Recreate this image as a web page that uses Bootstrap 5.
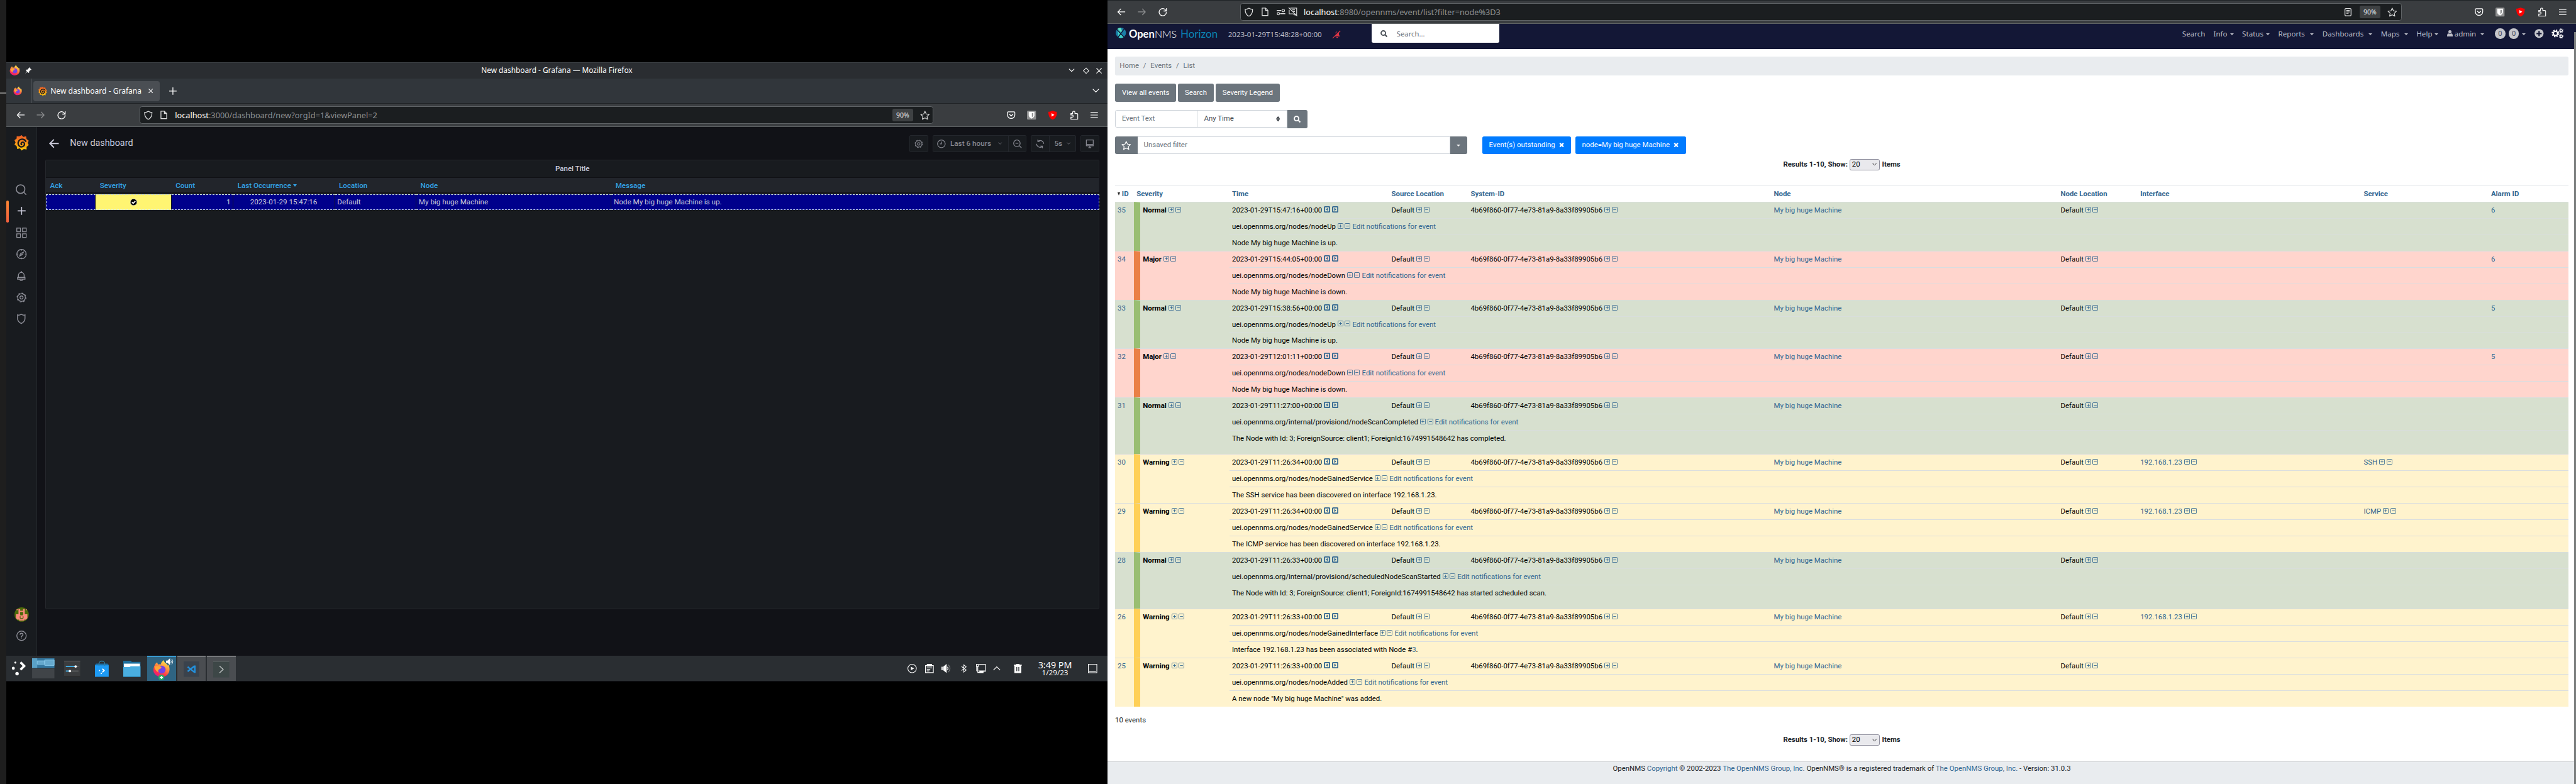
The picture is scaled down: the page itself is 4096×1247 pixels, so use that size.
<!DOCTYPE html>
<html lang="en">
<head>
<meta charset="utf-8">
<title>Grafana and OpenNMS Horizon</title>
<link href="https://cdn.jsdelivr.net/npm/bootstrap@5.3.0/dist/css/bootstrap.min.css" rel="stylesheet">
<style>
html,body{margin:0;background:#000;overflow:hidden}
.desk{zoom:.91204;width:4491px;height:1368px;position:relative;background:#000;overflow:hidden;line-height:1;white-space:nowrap}
.noto{font-family:"Noto Sans",sans-serif}
.robo{font-family:Roboto,sans-serif}
svg{display:block;fill:none;stroke:currentColor;overflow:visible}
.edge{position:absolute;left:0;top:0;width:11px;height:1368px;background:#1e1e1e}
.edge i{display:block;margin-top:161px;height:2px;background:#7d7d7d}
.win-l{position:absolute;left:11px;top:108px;width:1920px;height:1080px;background:#111217}
.win-r{position:absolute;left:1931px;top:0;width:2560px;height:1368px;background:#fff}

/* browser chrome */
.titlebar{height:29px;background:#2a2d31;border-top:1px solid #3c4044;color:#fcfcfc;font-size:13px;display:grid;grid-template-columns:5px 28px 11px 24px 1fr 264px 1fr 11px 13.500px 10.500px 13.500px 10px 9.500px;align-items:center}
.titlebar>*{justify-self:start}
.tabstrip{height:44px;background:#31363b;border-bottom:1px solid #202326;color:#fcfcfc;font-size:13.23px;display:grid;grid-template-columns:12px 17px 14px 4px 221px 16px 13px 1fr 12px 14.500px;align-items:center}
.tabstrip .vline{background:#5b5f63;width:1px;height:43px}
.ftab{height:36px;border-radius:4px;background:#4a4e53;display:grid;grid-template-columns:9px 16px 5px 159px 12px 9px;align-items:center;margin-top:1px}
.navbar-ff{height:41px;background:#3a3d40;border-bottom:1px solid #5e6264;color:#fcfcfc;display:grid;align-items:center;font-size:13.96px}
.nl{grid-template-columns:17px 36px 36px 143px 1384.400px 128.200px 35.400px 36.500px 37.300px 36px 1fr}
.nr{grid-template-columns:16px 37px 36px 142px 2025px 128px 36px 36px 37px 37px 1fr}
.urlbar{height:31px;background:#1b1e20;border:1px solid #5f6366;border-radius:4px;display:grid;align-items:center;color:#8f9193}
.urlbar b{font-weight:400;color:#fcfcfc}
.urlbar svg{color:#dfe0e0}
.ul-l{grid-template-columns:7px 29px 25px 1fr 36px 12px 22.400px}
.ul-r{grid-template-columns:7px 29px 27px 21px 26px 1fr 26px 36px 12px 24px}
.zoompill{height:22px;border-radius:3px;background:#3e4143;color:#e8e8e8;font-size:11.5px;line-height:22px;text-align:center}

/* grafana */
.gwrap{height:922px}
.side{width:54px;background:#181b1f;border-right:1px solid #25282d;color:#8e8f98}
.side>div{display:flex;align-items:center;justify-content:center;height:37.7px}
.side .glogo{height:54px;margin-bottom:35.5px}
.side .gava{margin-top:477px}
.side .act{position:relative;color:#ccccdc}
.side .act::before{content:"";position:absolute;left:0;top:1px;width:4px;height:38px;border-radius:2px;background:linear-gradient(#ff8833,#f55f3e)}
.ghead{width:1852px;height:57px;padding:0 0 0 21px;color:#ccccdc;font-size:15.74px}
.ghead .ttl{margin-left:19px}
.gbtn{height:30px;border:1px solid #24272d;background:#181b1f;border-radius:2px;display:flex;align-items:center;color:#85868f;font-size:12.9px;font-weight:500}
.gbtn>*{height:28px;display:flex;align-items:center;justify-content:center}
.gbtn .sep{border-left:1px solid #24272d}
.gb1{width:33px}.gb2{width:164px;margin-left:7.500px}.gb3{width:79px;margin-left:8px}.gb4{width:33px;margin-left:7.500px}
.w30{width:30px}
.gpanel{margin-left:14px;width:1838px;height:784px;border:1px solid #25282d;border-radius:2px;background:#181b1f;color:#ccccdc}
.gpanel .ptitle{height:30px;font-size:12.62px;font-weight:500;border-bottom:1px solid #101115;display:flex;align-items:center;justify-content:center}
.gtab{table-layout:fixed;width:1836px;border-collapse:separate;border-spacing:0;font-size:12.8px}
.gtab th{height:27px;padding:2px 7px 0;font-weight:500;color:#33a2e5;background:#22252b;border-bottom:1px solid #131418}
.gtab td{height:27px;padding:0 4px;background:#00008b;border-top:1px dashed #cfe0e6;border-bottom:1px dashed #cfe0e6;border-right:1px solid #14161f}
.gtab td:first-child{border-left:1px dashed #cfe0e6}
.gtab td:last-child{border-right:1px dashed #cfe0e6}
.gtab .gapr td{height:2px;padding:0;border:0;background:#181b1f}
.gtab td.sev{background:#fff572}
.gtab td.dt{padding-left:29px}
.gtab .crt{border-width:5px 4px 0;margin:0;vertical-align:2px}

/* taskbar */
.tbar{position:absolute;left:0;top:1036px;width:1920px;height:44px;background:#2a2e32;color:#fcfcfc;display:grid;align-items:center;grid-template-columns:9px 36px 56px 54px 49px 42px 52px 52px 51px 1169.700px 31px 29px 34px 26.300px 29.700px 36.300px 42px 59px 28px 1fr}
.task{height:44px;width:50px;display:flex;align-items:center;justify-content:center;background:#4a4d51;border-top:3px solid #77797c}
.task.on{background:#2f6482;border-color:#3a9cd2}
.tplus{left:19px;top:30px}.tvol{left:33px;top:2px}
.clock{text-align:center;font-size:15.71px;line-height:15px}
.clock small{display:block;font-size:12.76px;line-height:13px}

/* opennms */
.onms{font-size:12.52px;color:#212529}
.onav{height:43px;background:#131736;color:#bdbec8;font-size:12.7px;display:grid;align-items:start;grid-template-columns:14px 23px 90px 83px 181px 15px 54px 223px 1190.5px 54.5px 36px 14px 48px 15px 62px 15px 87px 15px 47px 15px 38px 15px 65px 19px 54px 15px 29px 1fr}
.onav>*{grid-row:1}
.brand{font:18.25px/20px Lato,sans-serif;color:#fff;margin-top:7px}
.brand b{font-weight:700}.brand .nms{font-size:17.6px;font-weight:300}.brand.hz{font-size:18.64px;color:#0b85b5}
.mt6{margin-top:6px}.mt12{margin-top:12px}
.osearch{height:33px;background:#fff;border-radius:0 0 3px 3px;color:#6c757d;font-size:12.4px;display:grid;grid-template-columns:16px 28px 1fr;align-items:center}
.mi{display:flex;justify-content:space-between;align-items:center;height:33px}
.crt{display:inline-block;border:3.4px solid transparent;border-top-color:currentColor;border-bottom:0;margin-top:3px}
.cnt{width:18px;height:18px;border-radius:50%;background:#c6c7cc;color:#42465c;font-size:12px;line-height:18px;text-align:center}
.obody{padding:0 0 0 13px;width:2547px}
.crumbs{height:33px;margin-top:14px;background:#e9ecef;border-radius:3px;padding:0 8px 1px;display:flex;align-items:center;color:#6c757d;gap:7.5px}
.lk,.crumbs a{color:#336791;text-decoration:none}
.obtn{height:32px;background:#6c757d;color:#fff;border:0;border-radius:3px;font-size:12.52px;padding:0 12px 1px;display:flex;align-items:center;justify-content:center;line-height:1}
.bar1{margin-top:14px;gap:3px}
.bar2{margin-top:14px;height:32px}
.bar3{margin-top:14px;height:31px}
.fld{height:31px;border:1px solid #ced4da;background:#fff;color:#6c757d;display:flex;align-items:center;padding:0 11px}
.f-text{width:144px;border-radius:3px 0 0 3px}
.f-time{width:157px;margin-left:-1px;color:#495057;justify-content:space-between}
.f-go{width:35px;border-radius:0 3px 3px 0;padding:0}
.f-star{width:39px;height:31px;border-radius:3px 0 0 3px;padding:0}
.f-name{width:545px;border-left:0}
.f-drop{width:30px;height:31px;border-radius:0 3px 3px 0;padding:0}
.chip{height:31px;background:#007bff;color:#fff;border-radius:3px;display:flex;align-items:center;padding:0 12px;margin-left:7px}
.chip.first{margin-left:26px}
.chip svg{margin-left:7px}
.pager{height:20px;width:2534px;display:flex;align-items:center;justify-content:center;font-weight:700;gap:3.5px;margin-top:8px}
.pager.low{margin-top:18px}
.psel{width:53px;height:20px;border:1px solid #8f8f9d;border-radius:3px;background:#e9e9ed;color:#000;font-weight:400;display:flex;align-items:center;justify-content:space-between;padding:0 4px 0 3px}
.total{margin-top:18px}
.table.evt{table-layout:fixed;width:2534px;margin:26px 0 0;border-collapse:separate;border-spacing:0;font-size:12.52px;line-height:14px}
.table.evt th{height:29.4px;padding:0 4.5px;border:0;border-top:1px solid #dee2e6;color:#336791;font-weight:700;vertical-align:middle}
.table.evt th .crt{color:#222;border-width:6px 3px 0;margin:0 3px 1px 0}
.table.evt td{height:28.4px;padding:6.6px 4.5px 0;border:0;border-top:1px solid #d9dde0;vertical-align:top;color:#000}
.table.evt .tall td.msg{height:42.4px}
.table.evt .n td{background:#d7e0cf;border-top-color:#d8dedb}.table.evt .m td{background:#ffd5cd}.table.evt .w td{background:#fff3cd}
.table.evt .n td.sv{border-left:12px solid #99be72}.table.evt .m td.sv{border-left:12px solid #ea8046}.table.evt .w td.sv{border-left:12px solid #ffd057}
.table.evt td.sv{font-weight:700}
.table.evt td svg{display:inline-block;vertical-align:-1.2px;color:#336791}
.pm{margin-left:3.5px;display:inline-flex;gap:2.4px;margin-right:3.2px}
.table.evt td a{color:#336791;text-decoration:none}
.ofoot{border-top:1px solid #cfd2d5;background:#e9ecef;height:41px;text-align:center;padding-top:6px;margin-top:27px}
.sbar{position:absolute;right:0;top:56px;width:3.4px;height:1312px;background:#7c7f7f}
</style>
</head>
<body>
<svg width="0" height="0" class="position-absolute">
<defs>
<linearGradient id="gf" x1="0" y1="0" x2="0" y2="1"><stop offset="0" stop-color="#f05a28"/><stop offset="1" stop-color="#fbca0a"/></linearGradient>
<linearGradient id="ffx" x1=".8" y1="0" x2=".3" y2="1"><stop offset="0" stop-color="#fff44f"/><stop offset=".4" stop-color="#ff9640"/><stop offset=".75" stop-color="#ff3647"/><stop offset="1" stop-color="#e31587"/></linearGradient>
<symbol id="firefox" viewBox="0 0 32 32"><path fill="url(#ffx)" stroke="none" d="M3 10C4 7 6 5 8 4c0 2 1 3 2 4 1-1 3-1 4 0 1-4 3-6 6-8 0 4 3 5 5 7 1 1 2 2 2 3l1-2c4 8 2 16-4 20-7 4-16 3-21-4C0 20 1 14 3 10z"/><circle cx="16" cy="17" r="7" fill="#7542e5" stroke="none"/><path fill="#ffa436" stroke="none" d="M3 11c4-1 8-1 12 1 1 1 0 3-3 4-2 1-3 3-2 6-4-2-7-6-7-11z"/></symbol>
<symbol id="grafana" viewBox="0 0 26 28"><path fill="url(#gf)" stroke="none" d="M13 0l3 3 5-1 1 5 4 3-2 4 2 4-4 3 0 5-5-1-4 3-3-4-5 1-1-5-4-3 2-4-2-4 4-3 0-4 5 0z"/><path stroke="#17191e" stroke-width="2.500" d="M21 12c-2-5-8-6-12-3-4 4-3 10 2 12 4 1 8-2 7-6-1-3-5-3-6 0 0 1 1 2 2 2"/></symbol>
<symbol id="back" viewBox="0 0 15 14"><path stroke-width="1.500" d="M15 7H1.500M7 1L1.200 7 7 13"/></symbol>
<symbol id="fwd" viewBox="0 0 15 14"><path stroke-width="1.300" d="M0 7h13.500M8 1l5.800 6L8 13"/></symbol>
<symbol id="reload" viewBox="0 0 15 15"><path stroke-width="1.500" d="M13 5A6.300 6.300 0 1 0 13.800 8M14 1v5H9"/></symbol>
<symbol id="shield" viewBox="0 0 15 16"><path stroke-width="1.400" d="M7.500 1C9 2 12 3 14 3.200 14 9 12 13 7.500 15.200 3 13 1 9 1 3.200 3 3 6 2 7.500 1z"/></symbol>
<symbol id="doc" viewBox="0 0 12 15"><path stroke-width="1.400" d="M1 1h6l4 4v9H1zM7 1v4h4"/></symbol>
<symbol id="star" viewBox="0 0 17 16"><path stroke-width="1.300" stroke-linejoin="round" d="M8.500 1l2.200 4.800 5.200.600-3.800 3.600 1 5.200-4.600-2.600-4.600 2.600 1-5.200L1.100 6.400l5.200-.600z"/></symbol>
<symbol id="pocket" viewBox="0 0 15 14"><path stroke-width="1.500" d="M2.500 1h10a1.500 1.500 0 0 1 1.500 1.500V6a6.500 6.500 0 0 1-13 0V2.500A1.500 1.500 0 0 1 2.500 1zM4.300 5l3.200 3.200L10.700 5"/></symbol>
<symbol id="bitw" viewBox="0 0 16 16"><rect width="16" height="16" rx="2" fill="#8f9091" stroke="none"/><path fill="#fff" stroke="none" d="M3 2h10v6c0 3-3 5-5 6-2-1-5-3-5-6z"/><path fill="#8f9091" stroke="none" d="M8.500 4H11v4c0 1.500-1.500 3-2.500 3.700z"/></symbol>
<symbol id="yt" viewBox="0 0 15 16"><path fill="#f00" stroke="none" d="M7.500 0C10 1 12.500 2 15 2c0 7-2 11.500-7.500 14C2 13.500 0 9 0 2c2.500 0 5-1 7.500-2z"/><path fill="#fff" stroke="none" d="M5.500 4.500l5 3-5 3z"/></symbol>
<symbol id="puzzle" viewBox="0 0 15 16"><path stroke-width="1.400" d="M5 5V3a2 2 0 0 1 4 0v2h3.500a1.500 1.500 0 0 1 1.500 1.500V15H2v-3.500h2a1.700 1.700 0 0 0 0-4H2V5z"/></symbol>
<symbol id="burger" viewBox="0 0 13 11"><path stroke-width="1.300" d="M0 1h13M0 5.500h13M0 10h13"/></symbol>
<symbol id="chev" viewBox="0 0 12 7"><path stroke-width="1.400" d="M.700.700L6 6l5.300-5.300"/></symbol>
<symbol id="mag" viewBox="0 0 12 12"><circle cx="5" cy="5" r="3.900" stroke-width="2"/><path stroke-width="2.200" d="M8 8l3.500 3.500"/></symbol>
<symbol id="gmag" viewBox="0 0 19 19"><circle cx="8.500" cy="8.500" r="7.500" stroke-width="1.700"/><path stroke-width="1.700" d="M14 14l4.300 4.300"/></symbol>
<symbol id="gear" viewBox="0 0 20 20"><circle cx="10" cy="10" r="7.500" stroke-width="1.500"/><circle cx="10" cy="10" r="8.700" stroke-width="1.500" stroke-dasharray="3.400 3.430"/><circle cx="10" cy="10" r="3" stroke-width="1.600"/></symbol>
<symbol id="plus" viewBox="0 0 10 10"><rect x=".5" y=".5" width="9" height="9" rx="1.500"/><path d="M2.500 5h5M5 2.500v5"/></symbol>
<symbol id="minus" viewBox="0 0 10 10"><rect x=".5" y=".5" width="9" height="9" rx="1.500"/><path d="M2.500 5h5"/></symbol>
<symbol id="cleft" viewBox="0 0 11 11"><rect x="1" y="1" width="9" height="9" rx="1" stroke-width="2"/><path fill="currentColor" stroke="none" d="M7 2.700v5.600L3.500 5.500z"/></symbol>
<symbol id="cright" viewBox="0 0 11 11"><rect x="1" y="1" width="9" height="9" rx="1" stroke-width="2"/><path fill="currentColor" stroke="none" d="M4 2.700v5.600l3.500-2.800z"/></symbol>
<symbol id="xx" viewBox="0 0 9 9"><path stroke-width="2.800" d="M1 1l7 7M8 1L1 8"/></symbol>
</defs></svg>

<main class="desk">
<div class="edge"><i></i></div>

<section class="win-l">
  <div class="titlebar noto">
    <span></span><svg width="19" height="20"><use href="#firefox"/></svg>
    <svg width="11" height="11" viewBox="0 0 11 11"><path fill="#fcfcfc" stroke="none" d="M7 0l4 4-1 1-1 0-2 2 0 2-1 1-2-2-4 3 3-4-2-2 1-1h2l2-2z"/></svg>
    <span></span><span></span><span>New dashboard - Grafana — Mozilla Firefox</span><span></span>
    <svg width="11" height="6"><use href="#chev"/></svg><span></span>
    <svg width="11" height="12" viewBox="0 0 12 12"><path stroke-width="1.200" d="M6 .8L11.200 6 6 11.200.8 6z"/></svg><span></span>
    <svg width="10" height="10" viewBox="0 0 10 10"><path stroke-width="1.300" d="M.5.5l9 9M9.500.5l-9 9"/></svg>
  </div>
  <div class="tabstrip noto">
    <span></span><svg width="16" height="17"><use href="#firefox"/></svg><span></span><i class="vline"></i>
    <div class="ftab"><span></span><svg width="15" height="16"><use href="#grafana"/></svg><span></span><span>New dashboard - Grafana</span><span></span>
      <svg width="8" height="8" viewBox="0 0 8 8"><path stroke-width="1.200" d="M.5.5l7 7M7.500.5l-7 7"/></svg></div>
    <span></span><svg width="13" height="13" viewBox="0 0 13 13"><path stroke-width="1.400" d="M6.500 0v13M0 6.500h13"/></svg><span></span>
    <svg width="12" height="7"><use href="#chev"/></svg>
  </div>
  <div class="navbar-ff nl noto">
    <span></span><svg width="15" height="13"><use href="#back"/></svg><svg width="15" height="13" opacity=".45"><use href="#fwd"/></svg><svg width="15" height="15"><use href="#reload"/></svg>
    <div class="urlbar ul-l"><span></span><svg width="15" height="16"><use href="#shield"/></svg><svg width="12" height="15"><use href="#doc"/></svg>
      <span><b>localhost</b>:3000/dashboard/new?orgId=1&amp;viewPanel=2</span><span class="zoompill">90%</span><span></span><svg width="17" height="16"><use href="#star"/></svg></div>
    <span></span><svg width="15" height="14"><use href="#pocket"/></svg><svg width="16" height="16"><use href="#bitw"/></svg><svg width="15" height="16"><use href="#yt"/></svg><svg width="15" height="16"><use href="#puzzle"/></svg><svg width="13" height="11"><use href="#burger"/></svg>
  </div>
  <div class="d-flex robo gwrap">
    <div class="side">
      <div class="glogo"><svg width="25" height="27"><use href="#grafana"/></svg></div>
      <div><svg width="19" height="19"><use href="#gmag"/></svg></div>
      <div class="act"><svg width="14" height="14" viewBox="0 0 14 14"><path stroke-width="1.700" d="M7 0v14M0 7h14"/></svg></div>
      <div><svg width="18" height="18" viewBox="0 0 18 18"><path stroke-width="1.500" d="M.8.8h6.400v6.400H.8zM10.800.8h6.400v6.400h-6.400zM.8 10.800h6.400v6.400H.8zM10.800 10.800h6.400v6.400h-6.400z"/></svg></div>
      <div><svg width="18" height="18" viewBox="0 0 18 18"><circle cx="9" cy="9" r="8.200" stroke-width="1.500"/><path stroke-width="1.300" d="M9 1v2M9 15v2M1 9h2M15 9h2M12.500 5.500l-2 4.500-5 2.500 2-4.500zM8 9.500l1.500-1"/></svg></div>
      <div><svg width="15" height="18" viewBox="0 0 15 18"><path stroke-width="1.500" d="M7.500 0v2.500M1 14.300v-3h1.500V7.500a5 5 0 0 1 10 0v3.800H14v3zM2.500 11.300h10M5 15a2.600 2.600 0 0 0 5 0"/></svg></div>
      <div><svg width="18" height="18"><use href="#gear"/></svg></div>
      <div><svg width="15" height="18" viewBox="0 0 15 18"><path stroke-width="1.600" d="M1 2c2 .8 4.500.2 6.500-1 2 1.200 4.500 1.800 6.500 1v6c0 4-2.500 7-6.500 9C3.500 15 1 12 1 8z"/></svg></div>
      <div class="gava"><svg width="25" height="25" viewBox="0 0 25 25"><circle cx="12.500" cy="12.500" r="12.500" fill="#4c6a0a" stroke="none"/><path fill="#fb8b7c" stroke="none" d="M7 3h3v3h5V3h3v9h4.500v7L20 21.500h-3v1.500h-9v-1.500H5L2.500 19v-7H7zM10 9v5h5V9zM9 16v2h2v-2zM14 16v2h2v-2zM4 3h1.500v2H3.500zM20 3h1l1 2h-2z"/><path fill="#4c6a0a" stroke="none" d="M10 8h5v4h-5zM9.500 19h6v1.500h-6z"/></svg></div>
      <div><svg width="18" height="18" viewBox="0 0 18 18"><circle cx="9" cy="9" r="8.200" stroke-width="1.500"/><path stroke-width="1.600" d="M6.500 7.200a2.500 2.500 0 1 1 2.500 2.500v1.300M9 12.200v1.600"/></svg></div>
    </div>
    <div>
      <div class="ghead d-flex align-items-center">
        <svg width="17" height="16" viewBox="0 0 17 16"><path stroke-width="2.200" d="M17 8H2M8.500 1L1.500 8l7 7"/></svg><span class="ttl me-auto">New dashboard</span>
        <div class="gbtn gb1"><span class="w-100"><svg width="15" height="15"><use href="#gear"/></svg></span></div>
        <div class="gbtn gb2"><span class="w30"><svg width="15" height="15" viewBox="0 0 15 15"><circle cx="7.500" cy="7.500" r="6.700" stroke-width="1.400"/><path stroke-width="1.400" d="M7.500 3.500v4h-2.500"/></svg></span><span>Last 6 hours</span><span class="w30"><svg width="7" height="4.500"><use href="#chev"/></svg></span><span class="sep flex-fill"><svg width="15" height="15" viewBox="0 0 15 15"><circle cx="6.500" cy="6.500" r="5.700" stroke-width="1.400"/><path stroke-width="1.400" d="M11 11l3.500 3.500M4 6.500h5"/></svg></span></div>
        <div class="gbtn gb3"><span class="w30"><svg width="15" height="15" viewBox="0 0 15 15"><path stroke-width="1.400" d="M3.500 3A6.300 6.300 0 0 1 13.800 7.500M3.500 0v3.500H7M11.500 12A6.300 6.300 0 0 1 1.200 7.500M11.500 15v-3.500H8"/></svg></span><span class="sep flex-fill">5s<svg class="ms-2" width="7" height="4.500"><use href="#chev"/></svg></span></div>
        <div class="gbtn gb4"><span class="w-100"><svg width="15" height="15" viewBox="0 0 15 15"><path stroke-width="1.400" d="M1.500.8h12v10h-12zM1.500 8.500h12M7.500 11v3M5 14.200h5"/></svg></span></div>
      </div>
      <div class="gpanel">
        <div class="ptitle">Panel Title</div>
        <table class="gtab">
          <colgroup><col style="width:87px"><col style="width:132px"><col style="width:108px"><col style="width:177px"><col style="width:142px"><col style="width:340px"><col></colgroup>
          <tr><th>Ack</th><th>Severity</th><th>Count</th><th>Last Occurrence <i class="crt"></i></th><th>Location</th><th>Node</th><th>Message</th></tr>
          <tr class="gapr"><td colspan="7"></td></tr>
          <tr><td></td><td class="sev"><svg class="mx-auto" width="12" height="12" viewBox="0 0 12 12"><circle cx="6" cy="6" r="5.800" fill="#000" stroke="#fff" stroke-width=".6"/><path stroke="#fff" stroke-width="1.900" d="M3 6l2.200 2.200L9 4.200"/></svg></td><td class="text-end">1</td><td class="dt">2023-01-29 15:47:16</td><td>Default</td><td>My big huge Machine</td><td>Node My big huge Machine is up.</td></tr>
        </table>
      </div>
    </div>
  </div>
  <div class="tbar noto">
    <span></span>
    <svg width="25" height="24" viewBox="0 0 25 24"><g fill="#fff" stroke="none"><circle cx="7" cy="2" r="1.800"/><circle cx="3.500" cy="12" r="2.600"/><circle cx="10" cy="21.500" r="3"/></g><path stroke="#fff" stroke-width="4" d="M16 1.500l6.500 6.500-6.500 6.500"/></svg>
    <svg width="39" height="35" viewBox="0 0 39 35"><g stroke="none"><path fill="#34779f" d="M0 0h39v17H0z"/><path fill="#5aa1c6" d="M0 0h9v17H0z"/><path fill="#66a9cd" stroke="#8accec" d="M9 4.500h13v6H9zM22 3h16.500v9.500H22z"/><path fill="#404448" d="M0 18h39v17H0z"/></g></svg>
    <svg width="28" height="28" viewBox="0 0 28 28"><path fill="#3a3c3e" stroke="none" d="M0 0h28v28H0z"/><path stroke="#66686a" d="M0 .5h28"/><path stroke="#222" d="M0 27.500h28"/><path stroke="#5d5f61" stroke-width="2" d="M3 10h22M3 18h22"/><path stroke="#3daee9" stroke-width="2" d="M3 10h17M3 18h7"/><circle cx="20" cy="10" r="2.100" fill="#fff" stroke="none"/><circle cx="10" cy="18" r="2.100" fill="#fff" stroke="none"/></svg>
    <svg width="24" height="28" viewBox="0 0 24 28"><path fill="#1e9bf5" stroke="none" d="M0 7h24v21H0z"/><path fill="#1d6fa6" stroke="none" d="M2 5h20l2 3H0z"/><path stroke="#2f7fa5" stroke-width="1.500" d="M7 9V5a5 4.500 0 0 1 10 0v4"/><path stroke="#fff" stroke-width="2" d="M13 14l3 3-3 3"/><circle cx="8" cy="17" r="1" fill="#fff" stroke="none"/><circle cx="11" cy="22" r="1.200" fill="#fff" stroke="none"/></svg>
    <svg width="30" height="28" viewBox="0 0 30 28"><path fill="#1f6f9c" stroke="none" d="M0 0h13l2 2h15v26H0z"/><path fill="#fff" stroke="none" d="M1 5h28v6H1z"/><path fill="#4aaee0" stroke="none" d="M0 11h11l2-1.500h17V28H0z"/><path stroke="#2a86b5" d="M0 27.500h30"/></svg>
    <div class="task on position-relative"><svg width="31" height="31"><use href="#firefox"/></svg>
      <svg class="position-absolute tplus" width="10" height="10" viewBox="0 0 10 10"><circle cx="5" cy="5" r="5" fill="#27ae60" stroke="none"/><path stroke="#fff" stroke-width="1.500" d="M5 2.200v5.600M2.200 5h5.600"/></svg>
      <svg class="position-absolute tvol" width="13" height="12" viewBox="0 0 13 12"><path fill="#fff" stroke="none" d="M0 4h2.500L7 0v12L2.500 8H0z"/><path stroke="#fff" d="M8.500 4q1.500 2 0 4M10 1.500q3.500 4.500 0 9"/></svg></div>
    <div class="task"><svg width="27" height="27" viewBox="0 0 27 27"><path fill="#3a424c" stroke="none" d="M0 0h27v27H0z"/><path stroke="#2390dc" stroke-width="2.600" d="M7 9.500l12 9.500M7 17.500L19 8M19.500 7v13"/></svg></div>
    <div class="task"><svg width="28" height="28" viewBox="0 0 28 28"><path fill="#3d4747" stroke="none" d="M0 0h28v28H0z"/><path stroke="#5a6363" d="M0 .5h28"/><path stroke="#c3c7c7" stroke-width="1.400" d="M11 8l6.500 6-6.500 6"/></svg></div>
    <span></span>
    <svg width="16" height="16" viewBox="0 0 16 16"><circle cx="8" cy="8" r="7.400" stroke-width="1.200"/><path fill="#fff" stroke="none" d="M6 5l5.500 3L6 11z"/></svg>
    <svg width="15" height="16" viewBox="0 0 15 16"><path stroke-width="1.400" d="M.7 3h13.600v12.300H.7zM3 7h9M3 9.700h6M3 12.300h4.500"/><path fill="#fff" stroke="none" d="M3 0h9v4.500H3z"/></svg>
    <svg width="16" height="16" viewBox="0 0 16 16"><path fill="#fff" stroke="none" d="M0 5h2v6H0zM3 5l6-5v16l-6-5z"/><path stroke-width="1.300" d="M10.500 5q2 3 0 6"/><path opacity=".4" stroke-width="1.300" d="M12 1.500q6 6.500 0 13"/></svg>
    <svg width="10" height="16" viewBox="0 0 11 16"><path stroke-width="1.300" d="M1 4l9 7-4.500 4V1L10 5l-9 7"/></svg>
    <svg width="17" height="16" viewBox="0 0 17 16"><path stroke-width="1.300" d="M5.500.7h10.800v11.600H4.500M.7.700h3.600v3.600H.7zM1 4v8.500M3 4v11h4"/><path fill="#fff" stroke="none" d="M5 12h12v1.500h-4V16H6v-2.500H5z"/></svg>
    <svg width="13" height="7" viewBox="0 0 13 7"><path stroke-width="1.300" d="M.7 6.500l5.800-5.800 5.800 5.800"/></svg>
    <svg width="14" height="16" viewBox="0 0 14 16"><path fill="#fff" stroke="none" fill-rule="evenodd" d="M4 0h6v1.500h4V3h-1v13H1V3H0V1.500h4zM4.500 5.500v7H6v-7zM8 5.500v7h1.500v-7z"/></svg>
    <div class="clock">3:49 PM<small>1/29/23</small></div><span></span>
    <svg width="16" height="16" viewBox="0 0 16 16"><path stroke-width="1.200" d="M.6.600h14.800v14.800H.6zM2 13h12"/></svg>
  </div>
</section>

<section class="win-r">
  <div class="navbar-ff nr noto" style="border-top:1px solid #1f2326;height:42px">
    <span></span><svg width="15" height="13"><use href="#back"/></svg><svg width="15" height="13" opacity=".45"><use href="#fwd"/></svg><svg width="15" height="15"><use href="#reload"/></svg>
    <div class="urlbar ul-r"><span></span><svg width="15" height="16"><use href="#shield"/></svg><svg width="12" height="15"><use href="#doc"/></svg>
      <svg width="15" height="11" viewBox="0 0 15 11"><path stroke-width="1.400" d="M0 3h8M6 8.500h9"/><circle cx="11.500" cy="3" r="2.200" stroke-width="1.300"/><circle cx="3" cy="8.500" r="2" stroke-width="1.300"/></svg>
      <svg width="15" height="15" viewBox="0 0 15 15"><path stroke-width="1.300" d="M3 1h11v12h-3l-3-2H1V4M0 0l15 15M6 4h5M8 7h3"/></svg>
      <span><b>localhost</b>:8980/opennms/event/list?filter=node%3D3</span>
      <svg width="12" height="14" viewBox="0 0 12 14"><rect x=".7" y=".7" width="10.600" height="12.600" rx="1.500" stroke-width="1.400"/><path stroke-width="1.200" d="M3 4h6M3 6.500h6M3 9h4"/></svg>
      <span class="zoompill">90%</span><span></span><svg width="17" height="16"><use href="#star"/></svg></div>
    <span></span><svg width="15" height="14"><use href="#pocket"/></svg><svg width="16" height="16"><use href="#bitw"/></svg><svg width="15" height="16"><use href="#yt"/></svg><svg width="15" height="16"><use href="#puzzle"/></svg><svg width="13" height="11"><use href="#burger"/></svg>
  </div>
  <nav class="onav noto">
    <span></span>
    <svg class="mt6" width="18" height="18" viewBox="0 0 18 18"><circle cx="9" cy="9" r="9" fill="#1a7fa8" stroke="none"/><path fill="#3fd0c9" stroke="none" d="M3 2l12 14A9 9 0 0 1 5 17z"/><path stroke="#131736" stroke-width="1.600" d="M2 3l13 14M15 2L4 17"/><path fill="#5fe0c0" stroke="none" d="M3.500 2A9 9 0 0 1 9 0l2 6-2 2z"/></svg>
    <div class="brand"><b>Open</b><span class="nms">NMS</span></div><div class="brand hz">Horizon</div>
    <span class="mt12">2023-01-29T15:48:28+00:00</span>
    <svg class="mt12" width="15" height="13" viewBox="0 0 15 13"><path fill="#dc3545" stroke="none" d="M9 1.500a3 3 0 0 1 3 3c0 2.500.5 3.500 1.500 4.500v1H4.500V9C5.500 8 6 7 6 4.500a3 3 0 0 1 3-3zM7.500 11h3a1.500 1.500 0 0 1-3 0z"/><path stroke="#131736" stroke-width="2.400" d="M12.300 0L1 11"/><path stroke="#dc3545" stroke-width="1.400" d="M14.500 0L1 13"/></svg>
    <span></span>
    <div class="osearch"><span></span><svg width="12" height="12" color="#495057"><use href="#mag"/></svg><span>Search...</span></div>
    <span></span>
    <div class="mi">Search</div><div class="mi">Info<i class="crt"></i></div><span></span>
    <div class="mi">Status<i class="crt"></i></div><span></span>
    <div class="mi">Reports<i class="crt"></i></div><span></span>
    <div class="mi">Dashboards<i class="crt"></i></div><span></span>
    <div class="mi">Maps<i class="crt"></i></div><span></span>
    <div class="mi">Help<i class="crt"></i></div><span></span>
    <div class="mi"><svg width="10" height="11" viewBox="0 0 10 11"><path fill="currentColor" stroke="none" d="M5 0a2.700 2.700 0 0 1 2.700 3C7.700 4.500 6.500 6 5 6S2.300 4.500 2.300 3A2.700 2.700 0 0 1 5 0zM2 5.500Q5 8 8 5.500c1.500.8 2 2.500 2 5.500H0C0 8 .5 6.300 2 5.500z"/></svg>admin<i class="crt ms-1"></i></div><span></span>
    <div class="mi"><span class="cnt">0</span><span class="cnt">0</span><i class="crt"></i></div><span></span>
    <div class="mi"><svg width="16" height="16" viewBox="0 0 16 16"><circle cx="8" cy="8" r="7.800" fill="#c6c7cc" stroke="none"/><path stroke="#131736" stroke-width="2.400" d="M8 3.500v9M3.500 8h9"/></svg></div>
    <div class="mi"><svg width="21" height="18" viewBox="0 0 21 18" color="#fff"><circle cx="7" cy="9" r="3.800" stroke-width="2.400"/><circle cx="7" cy="9" r="5.800" stroke-width="2" stroke-dasharray="2.400 2.155"/><circle cx="17" cy="4" r="2" stroke-width="1.500"/><circle cx="17" cy="4" r="3.200" stroke-width="1.200" stroke-dasharray="1.400 1.110"/><circle cx="17" cy="14" r="2" stroke-width="1.500"/><circle cx="17" cy="14" r="3.200" stroke-width="1.200" stroke-dasharray="1.400 1.110"/></svg></div>
  </nav>
  <div class="obody onms robo">
    <div class="crumbs"><a>Home</a><span>/</span><a>Events</a><span>/</span><span>List</span></div>
    <div class="d-flex bar1"><button class="obtn">View all events</button><button class="obtn">Search</button><button class="obtn">Severity Legend</button></div>
    <div class="d-flex bar2">
      <div class="fld f-text">Event Text</div>
      <div class="fld f-time">Any Time <svg width="7" height="9" viewBox="0 0 7 9"><path fill="#343a40" stroke="none" d="M3.500 0L7 4H0zM0 5h7L3.500 9z"/></svg></div>
      <button class="obtn f-go"><svg width="12" height="12"><use href="#mag"/></svg></button>
    </div>
    <div class="d-flex bar3">
      <button class="obtn f-star"><svg width="17" height="16"><use href="#star"/></svg></button>
      <div class="fld f-name">Unsaved filter</div>
      <button class="obtn f-drop"><i class="crt m-0"></i></button>
      <div class="chip first">Event(s) outstanding<svg width="9" height="8"><use href="#xx"/></svg></div>
      <div class="chip">node=My big huge Machine<svg width="9" height="8"><use href="#xx"/></svg></div>
    </div>
    <div class="pager">Results 1-10, Show: <span class="psel">20<svg width="8" height="5" color="#000"><use href="#chev"/></svg></span> Items</div>
    <table class="table evt">
      <colgroup><col style="width:33px"><col style="width:166.500px"><col style="width:278px"><col style="width:138px"><col style="width:528.500px"><col style="width:500px"><col style="width:139px"><col style="width:389.500px"><col style="width:222px"><col></colgroup>
      <thead><tr><th><i class="crt"></i>ID</th><th>Severity</th><th>Time</th><th>Source Location</th><th>System-ID</th><th>Node</th><th>Node Location</th><th>Interface</th><th>Service</th><th>Alarm ID</th></tr></thead>
      <tbody id="events"></tbody>
    </table>
    <div class="total">10 events</div>
    <div class="pager low">Results 1-10, Show: <span class="psel">20<svg width="8" height="5" color="#000"><use href="#chev"/></svg></span> Items</div>
  </div>
  <footer class="ofoot onms robo">OpenNMS <a class="lk">Copyright</a> © 2002-2023 <a class="lk">The OpenNMS Group, Inc.</a> OpenNMS® is a registered trademark of <a class="lk">The OpenNMS Group, Inc.</a> - Version: 31.0.3</footer>
  <div class="sbar"></div>
</section>
</main>

<script src="https://cdn.jsdelivr.net/npm/bootstrap@5.3.0/dist/js/bootstrap.bundle.min.js"></script>
<script>
const icon = (id, s) => `<svg width="${s}" height="${s}"><use href="#${id}"/></svg>`;
const pm = `<span class="pm">${icon('plus',10)}${icon('minus',10)}</span>`;
const nav = `<span class="pm">${icon('cleft',11)}${icon('cright',11)}</span>`;
// id, severity, time, uei, message, alarm, interface, service
const events = [
 [35,'Normal','2023-01-29T15:47:16','nodes/nodeUp','Node My big huge Machine is up.',6],
 [34,'Major','2023-01-29T15:44:05','nodes/nodeDown','Node My big huge Machine is down.',6],
 [33,'Normal','2023-01-29T15:38:56','nodes/nodeUp','Node My big huge Machine is up.',5],
 [32,'Major','2023-01-29T12:01:11','nodes/nodeDown','Node My big huge Machine is down.',5],
 [31,'Normal','2023-01-29T11:27:00','internal/provisiond/nodeScanCompleted','The Node with Id: 3; ForeignSource: client1; ForeignId:1674991548642 has completed.'],
 [30,'Warning','2023-01-29T11:26:34','nodes/nodeGainedService','The SSH service has been discovered on interface 192.168.1.23.','','192.168.1.23','SSH'],
 [29,'Warning','2023-01-29T11:26:34','nodes/nodeGainedService','The ICMP service has been discovered on interface 192.168.1.23.','','192.168.1.23','ICMP'],
 [28,'Normal','2023-01-29T11:26:33','internal/provisiond/scheduledNodeScanStarted','The Node with Id: 3; ForeignSource: client1; ForeignId:1674991548642 has started scheduled scan.'],
 [26,'Warning','2023-01-29T11:26:33','nodes/nodeGainedInterface','Interface 192.168.1.23 has been associated with Node #<a>3</a>.','','192.168.1.23'],
 [25,'Warning','2023-01-29T11:26:33','nodes/nodeAdded','A new node "My big huge Machine" was added.']
];
document.getElementById('events').innerHTML = events.map(([id,sev,time,uei,msg,alarm,ip,svc]) => {
  const c = sev[0].toLowerCase() + (uei.startsWith('internal') ? ' tall' : '');
  return `<tr class="${c}"><td rowspan="3"><a>${id}</a></td><td rowspan="3" class="sv">${sev}${pm}</td><td>${time}+00:00${nav}</td><td>Default${pm}</td><td>4b69f860-0f77-4e73-81a9-8a33f89905b6${pm}</td><td><a>My big huge Machine</a></td><td>Default${pm}</td><td>${ip?`<a>${ip}</a>${pm}`:''}</td><td>${svc?`<a>${svc}</a>${pm}`:''}</td><td><a>${alarm||''}</a></td></tr>
<tr class="${c}"><td colspan="8">uei.opennms.org/${uei}${pm}<a>Edit notifications for event</a></td></tr>
<tr class="${c}"><td colspan="8" class="msg">${msg}</td></tr>`;
}).join('');
</script>
</body>
</html>
